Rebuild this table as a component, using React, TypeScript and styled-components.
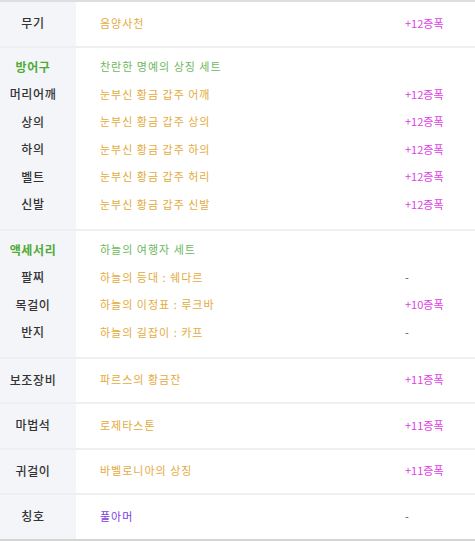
import styled, { createGlobalStyle } from "styled-components";

const GlobalStyle = createGlobalStyle`
  html, body {
    margin: 0;
    padding: 0;
    background: #fff;
  }
  body {
    font-family: "Noto Sans CJK KR", "Noto Sans", sans-serif;
  }
`;

const Table = styled.div`
  width: 475px;
  border-top: 2px solid #dedede;
  border-bottom: 2px solid #d4d4d4;
`;

const Section = styled.div<{ $multi?: boolean }>`
  padding: ${(p) => (p.$multi ? "5px 0 11px" : "7px 0 9px")};
  background: linear-gradient(to right, #f4f5f9 76px, #fff 76px);
  & + & {
    border-top: 2px solid #efefef;
  }
`;

const Row = styled.div`
  display: grid;
  grid-template-columns: 76px 1fr 70px;
  align-items: center;
  height: 27.5px;
`;

const Label = styled.div<{ $group?: boolean }>`
  padding-right: 10px;
  text-align: center;
  font-size: 12px;
  font-weight: ${(p) => (p.$group ? 700 : 500)};
  letter-spacing: 0.6px;
  color: ${(p) => (p.$group ? "#4fab35" : "#333")};
`;

const Value = styled.div<{ $tone: "gold" | "green" | "purple" }>`
  padding-left: 24px;
  font-size: 11px;
  letter-spacing: 1px;
  white-space: nowrap;
  color: ${(p) =>
    p.$tone === "green" ? "#6db85c" : p.$tone === "purple" ? "#7a3de0" : "#e4aa3c"};
`;

const Amp = styled.div<{ $none?: boolean }>`
  font-size: 11px;
  color: ${(p) => (p.$none ? "#555" : "#e040e4")};
`;

type Item = { label: string; name: string; amp?: string; group?: boolean; tone?: "gold" | "green" | "purple" };

const sections: Item[][] = [
  [{ label: "무기", name: "음양사천", amp: "+12증폭" }],
  [
    { label: "방어구", name: "찬란한 명예의 상징 세트", group: true, tone: "green" },
    { label: "머리어깨", name: "눈부신 황금 갑주 어깨", amp: "+12증폭" },
    { label: "상의", name: "눈부신 황금 갑주 상의", amp: "+12증폭" },
    { label: "하의", name: "눈부신 황금 갑주 하의", amp: "+12증폭" },
    { label: "벨트", name: "눈부신 황금 갑주 허리", amp: "+12증폭" },
    { label: "신발", name: "눈부신 황금 갑주 신발", amp: "+12증폭" },
  ],
  [
    { label: "액세서리", name: "하늘의 여행자 세트", group: true, tone: "green" },
    { label: "팔찌", name: "하늘의 등대 : 쉐다르", amp: "-" },
    { label: "목걸이", name: "하늘의 이정표 : 루크바", amp: "+10증폭" },
    { label: "반지", name: "하늘의 길잡이 : 카프", amp: "-" },
  ],
  [{ label: "보조장비", name: "파르스의 황금잔", amp: "+11증폭" }],
  [{ label: "마법석", name: "로제타스톤", amp: "+11증폭" }],
  [{ label: "귀걸이", name: "바벨로니아의 상징", amp: "+11증폭" }],
  [{ label: "칭호", name: "풀아머", amp: "-", tone: "purple" }],
];

export default function App() {
  return (
    <>
      <GlobalStyle />
      <Table>
        {sections.map((rows, i) => (
          <Section key={i} $multi={rows.length > 1}>
            {rows.map((r) => (
              <Row key={r.label}>
                <Label $group={r.group}>{r.label}</Label>
                <Value $tone={r.tone ?? "gold"}>{r.name}</Value>
                <Amp $none={r.amp === "-"}>{r.amp ?? ""}</Amp>
              </Row>
            ))}
          </Section>
        ))}
      </Table>
    </>
  );
}
